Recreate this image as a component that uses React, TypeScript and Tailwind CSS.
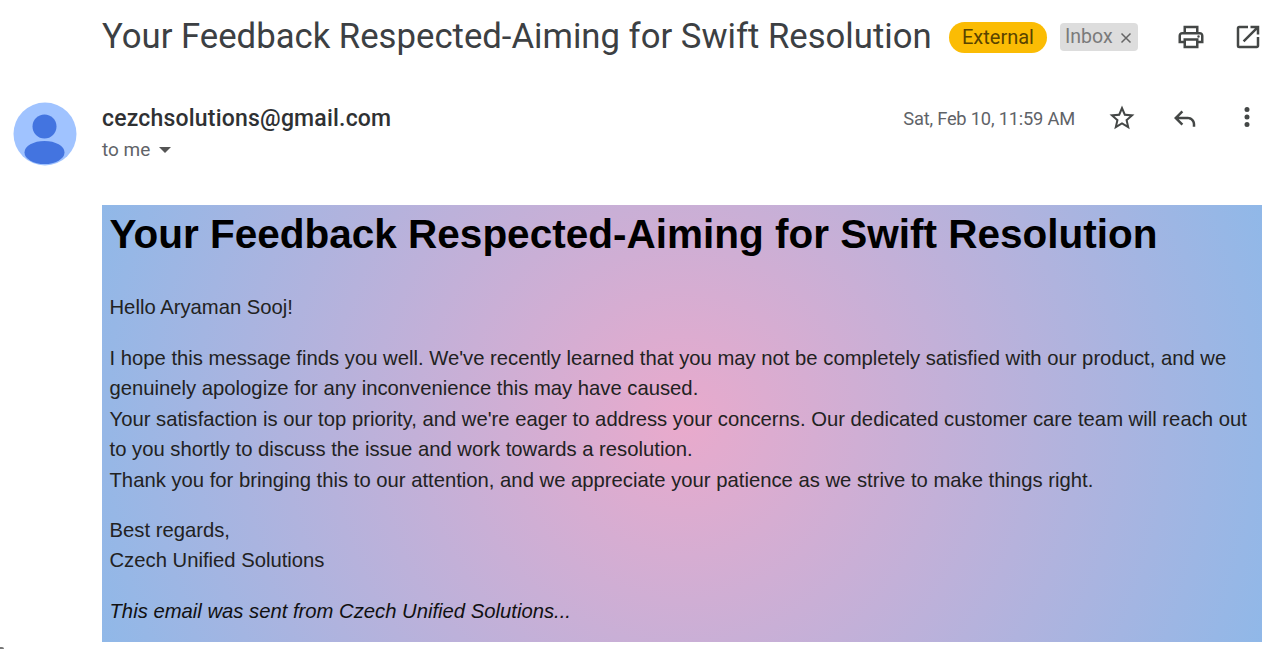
const sansFont = "font-['Roboto','Liberation_Sans',sans-serif]";

const ICONS: Record<string, string> = {
  print: 'M19 8h-1V3H6v5H5c-1.66 0-3 1.34-3 3v6h4v4h12v-4h4v-6c0-1.66-1.34-3-3-3zM8 5h8v3H8V5zm8 12v2H8v-4h8v2zm2-2v-2H6v2H4v-4c0-.55.45-1 1-1h14c.55 0 1 .45 1 1v4h-2zM18 10.5a1 1 0 1 1 0 2 1 1 0 0 1 0-2z',
  open: 'M19 19H5V5h7V3H5a2 2 0 0 0-2 2v14a2 2 0 0 0 2 2h14c1.1 0 2-.9 2-2v-7h-2v7zM14 3v2h3.59l-9.83 9.83 1.41 1.41L19 6.41V10h2V3h-7z',
  star: 'M22 9.24l-7.19-.62L12 2 9.19 8.63 2 9.24l5.46 4.73L5.82 21 12 17.27 18.18 21l-1.63-7.03L22 9.24zM12 15.4l-3.76 2.27 1-4.28-3.32-2.88 4.38-.38L12 6.1l1.71 4.04 4.38.38-3.32 2.88 1 4.28L12 15.4z',
  reply: 'M21 17v2h-2v-2c0-2.2-1.8-4-4-4H7.8l3.6 3.6L10 18l-6-6 6-6 1.4 1.4L7.8 11H15c3.3 0 6 2.7 6 6z',
  more: 'M12 8a2 2 0 1 0 0-4 2 2 0 0 0 0 4zm0 2a2 2 0 1 0 0 4 2 2 0 0 0 0-4zm0 6a2 2 0 1 0 0 4 2 2 0 0 0 0-4z',
};

function Icon({ name, className }: { name: string; className?: string }) {
  return (
    <svg width="30" height="30" viewBox="0 0 24 24" fill="#444746" className={`shrink-0 ${className ?? ''}`}>
      <path d={ICONS[name]} />
    </svg>
  );
}

function Avatar() {
  return (
    <svg width="64" height="64" viewBox="0 0 64 64" className="shrink-0">
      <circle cx="32" cy="32" r="31.5" fill="#a0c3ff" />
      <circle cx="31.5" cy="24.5" r="12" fill="#4374e0" />
      <ellipse cx="31.5" cy="50.5" rx="20" ry="11.5" fill="#4374e0" />
    </svg>
  );
}

export default function App() {
  return (
    <div className={`relative w-[1280px] h-[649px] overflow-hidden bg-white text-[#202124] ${sansFont}`}>
      {/* subject row */}
      <div className="flex items-center h-[74px] pl-[102px]">
        <h2 className="w-[831px] shrink-0 text-[34.7px] leading-[40px] -mt-[2px] font-normal text-[#3c4043] whitespace-nowrap">
          Your Feedback Respected-Aiming for Swift Resolution
        </h2>
        <span className="ml-4 flex items-center justify-center w-[98px] h-[31px] rounded-full bg-[#fbbc04] text-[20px] text-[#594300]">
          External
        </span>
        <span className="ml-[13px] flex items-center justify-between w-[78px] h-[28px] pl-[5px] pr-[3px] rounded bg-[#dddddd] text-[19.5px] text-[#7a7a7a]">
          Inbox
          <svg width="18" height="18" viewBox="0 0 18 18" stroke="#666666" strokeWidth="1.5" className="mt-[2px]">
            <path d="M4.5 4.5l9 9M13.5 4.5l-9 9" />
          </svg>
        </span>
        <Icon name="print" className="ml-[38px]" />
        <Icon name="open" className="ml-[27px]" />
      </div>

      {/* sender row */}
      <div className="flex h-[131px] pt-[28px] pl-[13px]">
        <Avatar />
        <div className="ml-[25px] flex flex-col">
          <span className="mt-[2px] text-[23px] leading-[30px] tracking-[0.2px] font-medium text-[#2f3133]">cezchsolutions@gmail.com</span>
          <span className="flex items-center mt-[2px] text-[19px] leading-[28px] text-[#5f6368]">
            to me
            <span className="ml-[9px] w-0 h-0 border-x-[6px] border-t-[6px] border-x-transparent border-t-[#555555]" />
          </span>
        </div>
        <div className="ml-auto flex items-start h-[32px] pr-[18px]">
          <span className="mt-[2px] text-[18.3px] leading-[30px] text-[#5f6368] tracking-[-0.2px]">Sat, Feb 10, 11:59 AM</span>
          <Icon name="star" className="ml-[32px] mt-[1px]" />
          <Icon name="reply" className="ml-[32px] mt-[1px]" />
          <Icon name="more" className="ml-[33px]" />
        </div>
      </div>

      {/* message body */}
      <div className="ml-[102px] w-[1160px] h-[437px] pl-[7.5px] pr-2 font-['Liberation_Sans',Arial,sans-serif] text-[20.25px] leading-[30.4px] text-[#222222] bg-[radial-gradient(circle,#e9aacc,#90b8e8)]">
        <h1 className="pt-[6px] text-[40.5px] leading-[46px] font-bold text-black">
          Your Feedback Respected-Aiming for Swift Resolution
        </h1>
        <p className="mt-[35px]">Hello Aryaman Sooj!</p>
        <p className="mt-[20.5px]">
          I hope this message finds you well. We've recently learned that you may not be completely satisfied with our product, and we genuinely apologize for any inconvenience this may have caused.
          <br />
          Your satisfaction is our top priority, and we're eager to address your concerns. Our dedicated customer care team will reach out to you shortly to discuss the issue and work towards a resolution.
          <br />
          Thank you for bringing this to our attention, and we appreciate your patience as we strive to make things right.
        </p>
        <p className="mt-[20px] leading-[30px]">
          Best regards,
          <br />
          Czech Unified Solutions
        </p>
        <p className="mt-[21.5px] italic text-[#111111]">This email was sent from Czech Unified Solutions...</p>
      </div>

      {/* speck left in the corner of the capture */}
      <div className="absolute left-0 bottom-0 w-[4px] h-[2px] rounded-tr-full bg-[#777777]" />
    </div>
  );
}
